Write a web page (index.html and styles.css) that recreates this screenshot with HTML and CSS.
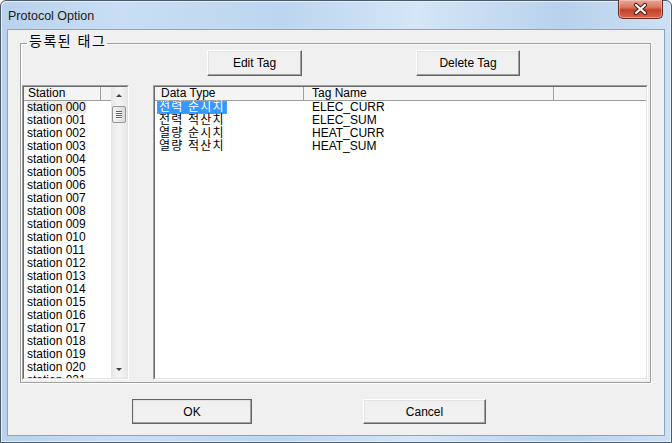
FILE: index.html
```html
<!DOCTYPE html>
<html lang="ko">
<head>
  <meta charset="UTF-8" />
  <title>Protocol Option</title>
  <link rel="stylesheet" href="styles.css">
</head>
<body>
  <div class="window">

    <!-- Title bar -->
    <div class="titlebar">
      <span class="title">Protocol Option</span>
      <div class="close-btn">
        <svg width="45" height="18" viewBox="0 0 45 18">
          <path d="M18 5 L27 13 M27 5 L18 13" stroke="#4a1a14" stroke-width="4.2" stroke-linecap="round" fill="none"/>
          <path d="M18 5 L27 13 M27 5 L18 13" stroke="#ffffff" stroke-width="2.2" stroke-linecap="round" fill="none"/>
        </svg>
      </div>
    </div>

    <!-- Client area -->
    <div class="client">
      <div class="groupbox">
        <span class="group-label">등록된 태그</span>

        <div class="tag-buttons">
          <button class="btn btn-edit">Edit Tag</button>
          <button class="btn btn-delete">Delete Tag</button>
        </div>

        <div class="lists">
          <div class="listbox station-list">
            <div class="station-col">
              <div class="lv-header">
                <div class="hcell station-h">Station</div>
                <div class="hcell"></div>
              </div>
              <div class="station-rows">
                <div class="row"><span class="sel-dim">station 000</span></div>
                <div class="row">station 001</div>
                <div class="row">station 002</div>
                <div class="row">station 003</div>
                <div class="row">station 004</div>
                <div class="row">station 005</div>
                <div class="row">station 006</div>
                <div class="row">station 007</div>
                <div class="row">station 008</div>
                <div class="row">station 009</div>
                <div class="row">station 010</div>
                <div class="row">station 011</div>
                <div class="row">station 012</div>
                <div class="row">station 013</div>
                <div class="row">station 014</div>
                <div class="row">station 015</div>
                <div class="row">station 016</div>
                <div class="row">station 017</div>
                <div class="row">station 018</div>
                <div class="row">station 019</div>
                <div class="row">station 020</div>
                <div class="row">station 021</div>
              </div>
            </div>
            <div class="scrollbar">
              <div class="sb-btn"><span class="arrow-up"></span></div>
              <div class="sb-thumb">
                <span></span><span></span><span></span><span></span>
              </div>
              <div class="sb-track"></div>
              <div class="sb-btn"><span class="arrow-down"></span></div>
            </div>
          </div>

          <div class="listbox data-list">
            <div class="lv-header">
              <div class="hcell col-type">Data Type</div>
              <div class="hcell col-name">Tag Name</div>
              <div class="hcell col-rest"></div>
            </div>
            <div class="data-row">
              <div class="cell col-type"><span class="ko selected">전력 순시치</span></div>
              <div class="cell col-name">ELEC_CURR</div>
            </div>
            <div class="data-row">
              <div class="cell col-type"><span class="ko">전력 적산치</span></div>
              <div class="cell col-name">ELEC_SUM</div>
            </div>
            <div class="data-row">
              <div class="cell col-type"><span class="ko">열량 순시치</span></div>
              <div class="cell col-name">HEAT_CURR</div>
            </div>
            <div class="data-row">
              <div class="cell col-type"><span class="ko">열량 적산치</span></div>
              <div class="cell col-name">HEAT_SUM</div>
            </div>
          </div>
        </div>
      </div>

      <div class="dialog-buttons">
        <button class="btn btn-ok">OK</button>
        <button class="btn btn-cancel">Cancel</button>
      </div>
    </div>
  </div>
</body>
</html>
```

FILE: styles.css
```css
* {
  box-sizing: border-box;
}
body {
  margin: 0;
  font-family: "Liberation Sans", "Noto Sans CJK KR", sans-serif;
  font-size: 12px;
  color: #000;
  background: #fff;
}
.window {
  width: 672px;
  height: 443px;
  border: 1px solid #4b5a6c;
  border-radius: 6px 6px 0 0;
  padding: 0 6px 6px;
  display: flex;
  flex-direction: column;
  background: linear-gradient(to right, #b9d1ec 0%, #c9def4 18%, #bdd5ef 42%, #d4e6f7 62%, #b9d1ec 84%, #cde0f5 100%);
  box-shadow: inset 1px 1px 0 #e6f0fb, inset -1px -1px 0 #e6f0fb;
}
.titlebar {
  height: 28px;
  display: flex;
  align-items: center;
}
.title {
  padding-left: 1px;
  margin-top: 1px;
  color: #1b1b1b;
  font-size: 12.5px;
}
.close-btn {
  margin-left: auto;
  margin-right: 2px;
  align-self: flex-start;
  margin-top: -1px;
  width: 45px;
  height: 19px;
  border: 1px solid #6a2a22;
  border-top: none;
  border-radius: 0 0 5px 5px;
  background: linear-gradient(to bottom, #e8a89b 0%, #d9785f 40%, #c4412c 55%, #d2664d 100%);
  box-shadow: inset 0 0 0 1px rgba(255, 210, 200, 0.5);
}
.close-btn svg {
  display: block;
  margin: 0 0 0 -1px;
}
.client {
  flex: none;
  height: 407px;
  border: 1px solid #8ea3bd;
  background: #f0f0f0;
}

/* group box */
.groupbox {
  position: relative;
  margin: 13px 0 0 12px;
  width: 631px;
  height: 340px;
  border: 1px solid #a0a0a0;
  box-shadow: inset 1px 1px 0 #fff, 1px 1px 0 #fff;
  padding: 6px 2px 1px 1px;
}
.group-label {
  position: absolute;
  top: -10px;
  left: 6px;
  padding: 0 1px 0 2px;
  background: #f0f0f0;
  font-size: 14px;
  line-height: 15px;
  letter-spacing: 1.5px;
}
.tag-buttons {
  display: flex;
  height: 26px;
}
.btn {
  font-family: "Liberation Sans", "Noto Sans CJK KR", sans-serif;
  font-size: 12px;
  color: #000;
  background: #f0f0f0;
  border: 1px solid;
  border-color: #fff #646464 #646464 #fff;
  box-shadow: inset -1px -1px 0 #a0a0a0, inset 1px 1px 0 #e3e3e3;
  padding: 0;
}
.btn-edit {
  margin-left: 185px;
  width: 95px;
}
.btn-delete {
  margin-left: 114px;
  width: 104px;
}
.lists {
  display: flex;
  gap: 24px;
  margin-top: 9px;
  height: 295px;
}
.listbox {
  background: #fff;
  border: 1px solid;
  border-color: #a0a0a0 #fff #fff #a0a0a0;
  padding: 1px;
  position: relative;
}
.listbox::before {
  content: "";
  position: absolute;
  inset: 0;
  border: 1px solid;
  border-color: #696969 #e3e3e3 #e3e3e3 #696969;
  pointer-events: none;
  z-index: 2;
}
.station-list {
  width: 107px;
  display: flex;
}
.data-list {
  width: 496px;
}

/* list view header */
.lv-header {
  display: flex;
  height: 14px;
  background: #f4f4f4;
  border-bottom: 1px solid #a0a0a0;
  line-height: 13px;
}
.hcell {
  height: 13px;
  white-space: nowrap;
}
.station-col {
  width: 87px;
  overflow: hidden;
}
.station-h {
  width: 77px;
  padding-left: 4px;
  border-right: 1px solid #a0a0a0;
}
.station-rows {
  height: 277px;
  overflow: hidden;
}
.row {
  height: 13px;
  line-height: 13px;
  padding-left: 3px;
  white-space: nowrap;
}
.sel-dim {
  background: #ececec;
}

/* scrollbar */
.scrollbar {
  width: 16px;
  display: flex;
  flex-direction: column;
  background: linear-gradient(to right, #e6e6e6, #f2f2f2 40%, #f2f2f2 60%, #e8e8e8);
}
.sb-btn {
  height: 17px;
  display: flex;
  align-items: center;
  justify-content: center;
}
.arrow-up {
  width: 0;
  height: 0;
  border-left: 3px solid transparent;
  border-right: 3px solid transparent;
  border-bottom: 3px solid #404040;
}
.arrow-down {
  width: 0;
  height: 0;
  border-left: 3px solid transparent;
  border-right: 3px solid transparent;
  border-top: 3px solid #404040;
}
.sb-thumb {
  margin: 2px 1px 0 1px;
  height: 17px;
  border: 1px solid #979797;
  border-radius: 2px;
  background: linear-gradient(to right, #f3f3f3, #e8e8e8 50%, #d8d8d8);
  display: flex;
  flex-direction: column;
  align-items: center;
  justify-content: center;
  gap: 1px;
}
.sb-thumb span {
  width: 6px;
  height: 1px;
  background: #5e5e5e;
  box-shadow: 0 1px 0 #fff;
}
.sb-track {
  flex: 1;
}

/* data list */
.col-type {
  width: 149px;
  padding-left: 6px;
}
.lv-header .col-type,
.lv-header .col-name {
  border-right: 1px solid #a0a0a0;
}
.col-name {
  width: 250px;
  padding-left: 8px;
}
.col-rest {
  flex: 1;
}
.data-row {
  display: flex;
  height: 13px;
  line-height: 13px;
}
.data-row .col-type {
  padding-left: 2px;
}
.cell {
  white-space: nowrap;
}
.ko {
  display: inline-block;
  height: 13px;
  padding: 0 2px;
  font-size: 12px;
  letter-spacing: 1.2px;
  line-height: 13px;
}
.selected {
  background: #3399ff;
  color: #fff;
  outline: 1px dotted #f08a24;
  outline-offset: -1px;
}

/* OK / Cancel */
.dialog-buttons {
  display: flex;
  margin: 16px 0 0 124px;
  height: 25px;
}
.btn-ok {
  width: 120px;
  border-color: #646464;
}
.btn-cancel {
  margin-left: 111px;
  width: 123px;
}
```
